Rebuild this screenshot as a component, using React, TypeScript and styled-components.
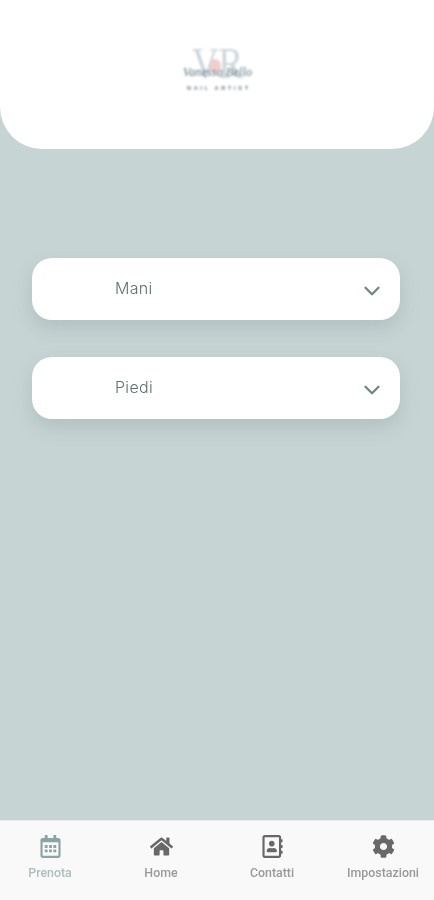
import React from "react";
import styled, { createGlobalStyle } from "styled-components";
import { FaCog, FaHome, FaRegAddressBook, FaRegCalendarAlt } from "react-icons/fa";
import { ChevronDown } from "lucide-react";

const GlobalStyle = createGlobalStyle`
  html, body {
    margin: 0;
    padding: 0;
    background: #c7d4d4;
  }
  * {
    box-sizing: border-box;
  }
`;

const tabs = [
  { label: "Prenota", icon: FaRegCalendarAlt, active: true },
  { label: "Home", icon: FaHome, active: false },
  { label: "Contatti", icon: FaRegAddressBook, active: false },
  { label: "Impostazioni", icon: FaCog, active: false },
];

const Logo = () => (
  <LogoSvg viewBox="0 -10 90 80" width="90" height="80" aria-label="Logo">
    <ellipse cx="43" cy="25" rx="6" ry="7" fill="#f3cdcd" />
    <text
      x="20"
      y="37"
      textLength="51"
      lengthAdjust="spacingAndGlyphs"
      fontFamily="Liberation Serif, serif"
      fontSize="44"
      fill="#cdd5da"
    >
      VR
    </text>
    <text
      x="11"
      y="35"
      textLength="69"
      fontFamily="Liberation Serif, serif"
      fontStyle="italic"
      fontSize="12"
      fill="#5a717c"
    >
      Vanessa Bello
    </text>
    <text
      x="15"
      y="49"
      textLength="61"
      fontFamily="Liberation Sans, sans-serif"
      fontWeight="700"
      fontSize="5.5"
      fill="#6a7a82"
    >
      NAIL ARTIST
    </text>
  </LogoSvg>
);

export default function App() {
  return (
    <Page>
      <GlobalStyle />
      <Header>
        <Logo />
      </Header>
      <Main>
        <SelectRow>
          <SelectLabel>Mani</SelectLabel>
          <Chevron size={26} strokeWidth={2.2} />
        </SelectRow>
        <SelectRow>
          <SelectLabel>Piedi</SelectLabel>
          <Chevron size={26} strokeWidth={2.2} />
        </SelectRow>
      </Main>
      <TabBar>
        {tabs.map(({ label, icon: Icon, active }) => (
          <Tab key={label} $active={active}>
            <Icon size={23} />
            <TabLabel $active={active}>{label}</TabLabel>
          </Tab>
        ))}
      </TabBar>
    </Page>
  );
}

const Page = styled.div`
  display: flex;
  flex-direction: column;
  width: 434px;
  height: 900px;
  overflow: hidden;
  background: #c7d4d4;
`;

const Header = styled.header`
  display: flex;
  align-items: center;
  justify-content: center;
  height: 149px;
  flex-shrink: 0;
  padding-bottom: 8px;
  background: #fff;
  border-radius: 0 0 42px 42px;
`;

const LogoSvg = styled.svg`
  filter: blur(0.8px);
`;

const Main = styled.main`
  display: flex;
  flex: 1;
  flex-direction: column;
  gap: 37px;
  padding: 109px 34px 0 32px;
`;

const SelectRow = styled.div`
  display: flex;
  align-items: center;
  justify-content: space-between;
  height: 62px;
  padding: 0 15px 0 83px;
  background: #fff;
  border-radius: 20px;
  box-shadow: 0 8px 18px rgba(120, 140, 140, 0.28);
`;

const SelectLabel = styled.span`
  position: relative;
  top: -1px;
  font-family: "Inter", "Liberation Sans", sans-serif;
  font-size: 16px;
  font-weight: 300;
  letter-spacing: 0.3px;
  color: #5f6f70;
  filter: blur(0.3px);
`;

const Chevron = styled(ChevronDown)`
  color: #718787;
  margin-top: 4px;
`;

const TabBar = styled.nav`
  display: grid;
  grid-template-columns: repeat(4, 72px);
  justify-content: space-between;
  height: 80px;
  flex-shrink: 0;
  padding: 0 15px 0 14px;
  background: #f9f9f9;
  border-top: 1px solid #ececec;
`;

const Tab = styled.div<{ $active: boolean }>`
  display: flex;
  flex-direction: column;
  align-items: center;
  padding-top: 14px;
  gap: 7px;
  color: ${(p) => (p.$active ? "#8aa5a5" : "#686868")};

  svg {
    filter: blur(0.3px);
  }
`;

const TabLabel = styled.span<{ $active: boolean }>`
  font-family: "Roboto", "Liberation Sans", sans-serif;
  font-size: 12.4px;
  font-weight: 500;
  white-space: nowrap;
  color: ${(p) => (p.$active ? "#afbdbd" : "#9a9a9a")};
  filter: blur(0.4px);
`;
